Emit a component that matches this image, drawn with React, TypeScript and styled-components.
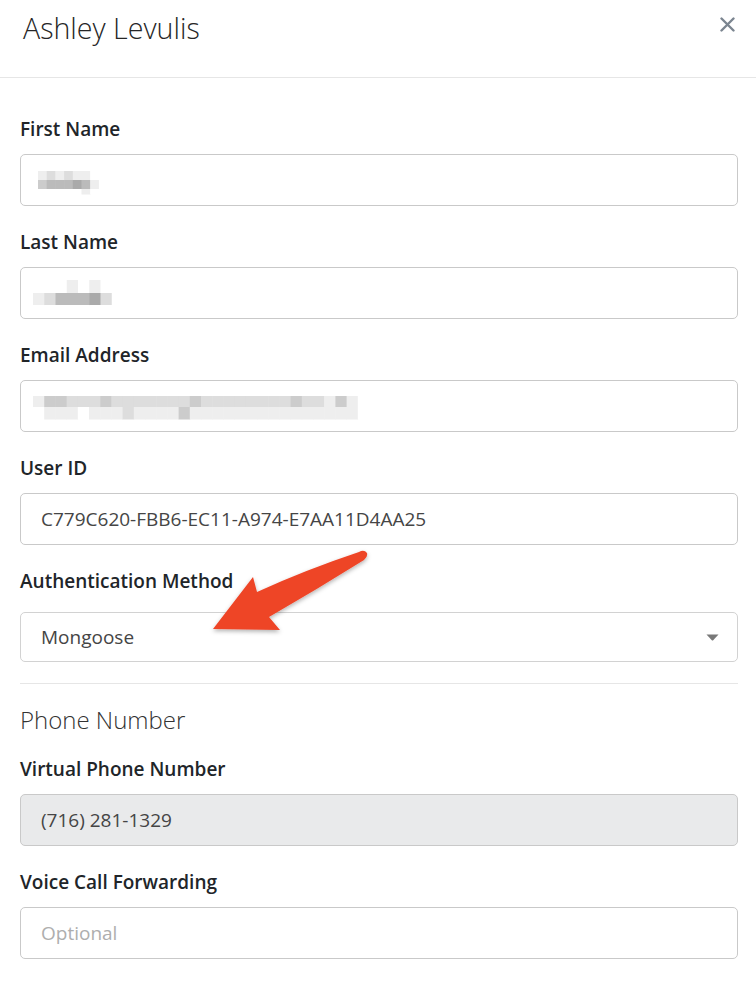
import React from "react";
import styled, { createGlobalStyle } from "styled-components";

const Global = createGlobalStyle`
  html, body { margin: 0; padding: 0; background: #ffffff; }
  body { font-family: "Open Sans", "Noto Sans", sans-serif; color: #212529; }
  * { box-sizing: border-box; }
`;

const Modal = styled.div`
  position: relative;
  width: 756px;
  min-height: 982px;
  background: #fff;
`;

const Header = styled.header`
  display: flex;
  justify-content: space-between;
  align-items: flex-start;
  height: 78px;
  padding: 11px 21px 0 23px;
  border-bottom: 1px solid #e6e6e6;
`;

const Title = styled.h1`
  margin: 0;
  font-size: 28.6px;
  line-height: 34px;
  font-weight: 300;
  color: #262626;
`;

const CloseButton = styled.button`
  margin-top: 6px;
  width: 15px;
  height: 15px;
  padding: 0;
  border: none;
  background: none;
  display: flex;
  cursor: pointer;
`;

const Body = styled.div`
  display: flex;
  flex-direction: column;
  padding: 39px 18px 0 20px;
`;

const Field = styled.div`
  display: flex;
  flex-direction: column;
  margin-bottom: 24px;
`;

const Label = styled.label`
  font-size: 19px;
  line-height: 24px;
  font-weight: 600;
  color: #212529;
  margin-bottom: 13px;
`;

const Box = styled.div<{ $disabled?: boolean; $placeholder?: boolean; $height?: number }>`
  display: flex;
  align-items: center;
  height: ${(p) => p.$height ?? 52}px;
  padding: 0 20px;
  border: 1px solid #c9c9c9;
  border-radius: 5px;
  background: ${(p) => (p.$disabled ? "#e9eaeb" : "#fff")};
  font-size: 19px;
  color: ${(p) => (p.$placeholder ? "#aeaeae" : "#454545")};
`;

const SelectBox = styled(Box)`
  justify-content: space-between;
  margin-top: 6px;
  border-color: #d2d2d2;
  padding-right: 18px;
`;

const Divider = styled.hr`
  margin: -3px 0 0;
  border: none;
  border-top: 1px solid #e6e6e6;
  height: 0;
`;

const SectionTitle = styled.h2`
  margin: 21px 0 22px;
  font-size: 24px;
  line-height: 30px;
  font-weight: 300;
  color: #333;
`;

const MosaicSvg = styled.svg<{ $shift: number }>`
  display: block;
  margin-left: ${(p) => p.$shift}px;
  overflow: visible;
`;

const Overlay = styled.svg`
  position: absolute;
  left: 0;
  top: 0;
  pointer-events: none;
  overflow: visible;
`;

type MosaicProps = { rows: string[]; cellW: number; rowH: number[]; shift: number; top: number };

function Mosaic({ rows, cellW, rowH, shift, top }: MosaicProps) {
  const width = Math.max(...rows.map((r) => r.replace(/ /g, "").length)) * cellW;
  const height = rowH.reduce((a, b) => a + b, 0);
  let y = 0;
  const rects: React.ReactNode[] = [];
  rows.forEach((row, ri) => {
    const cells = row.replace(/ /g, "").split("");
    cells.forEach((c, ci) => {
      if (c === "0") return;
      const color = "#" + c + c + c + c + c + c;
      rects.push(
        <rect key={ri + "-" + ci} x={ci * cellW} y={y} width={cellW + 0.5} height={rowH[ri] + 0.5} fill={color} />
      );
    });
    y += rowH[ri];
  });
  return (
    <MosaicSvg $shift={shift} width={width} height={height} style={{ marginTop: top }}>
      {rects}
    </MosaicSvg>
  );
}

export default function App() {
  return (
    <Modal>
      <Global />
      <Header>
        <Title>Ashley Levulis</Title>
        <CloseButton aria-label="Close">
          <svg width="15" height="15" viewBox="0 0 15 15">
            <path d="M1.5 1.5 L13.5 13.5 M13.5 1.5 L1.5 13.5" stroke="#7b8590" strokeWidth="2.4" strokeLinecap="round" />
          </svg>
        </CloseButton>
      </Header>
      <Body>
        <Field>
          <Label>First Name</Label>
          <Box>
            <Mosaic
              shift={-3}
              top={4}
              cellW={8.7}
              rowH={[9, 9, 5]}
              rows={["e d e d e e f f", "c b b b a b e f", "f f f f f e f f"]}
            />
          </Box>
        </Field>
        <Field>
          <Label>Last Name</Label>
          <Box>
            <Mosaic
              shift={-8}
              top={6}
              cellW={11.25}
              rowH={[13, 12, 8]}
              rows={["f f f e f e f f", "e d b b b a d f", "f f f f f f f f"]}
            />
          </Box>
        </Field>
        <Field>
          <Label>Email Address</Label>
          <Box>
            <Mosaic
              shift={-8}
              top={2}
              cellW={11.2}
              rowH={[11, 12]}
              rows={[
                "e c c d d d c d d d d d d d c d d d d d d d d c d d e c e f",
                "f e e e f e e e d e e e e c e e e e e e e e e e e e e e e f",
              ]}
            />
          </Box>
        </Field>
        <Field>
          <Label>User ID</Label>
          <Box>C779C620-FBB6-EC11-A974-E7AA11D4AA25</Box>
        </Field>
        <Field>
          <Label>Authentication Method</Label>
          <SelectBox $height={50}>
            <span>Mongoose</span>
            <svg width="13" height="7" viewBox="0 0 13 7">
              <path d="M0.5 0.5 H12.5 L7.2 6.2 Q6.5 6.9 5.8 6.2 Z" fill="#787878" />
            </svg>
          </SelectBox>
        </Field>
        <Divider />
        <SectionTitle>Phone Number</SectionTitle>
        <Field>
          <Label>Virtual Phone Number</Label>
          <Box $disabled>(716) 281-1329</Box>
        </Field>
        <Field>
          <Label>Voice Call Forwarding</Label>
          <Box $placeholder>Optional</Box>
        </Field>
      </Body>
      <Overlay width="756" height="982" viewBox="0 0 756 982">
        <defs>
          <filter id="arrowShadow" x="-20%" y="-20%" width="140%" height="140%">
            <feDropShadow dx="0" dy="2" stdDeviation="2" floodColor="#000" floodOpacity="0.3" />
          </filter>
        </defs>
        <path
          d="M359 552 Q364 549 367 553 Q368 557 364 560 Q316 590 269 617 L280 630 L213 629 L253 577 L257 592 Q305 570 359 552 Z"
          fill="#ee4427"
          filter="url(#arrowShadow)"
        />
      </Overlay>
    </Modal>
  );
}
